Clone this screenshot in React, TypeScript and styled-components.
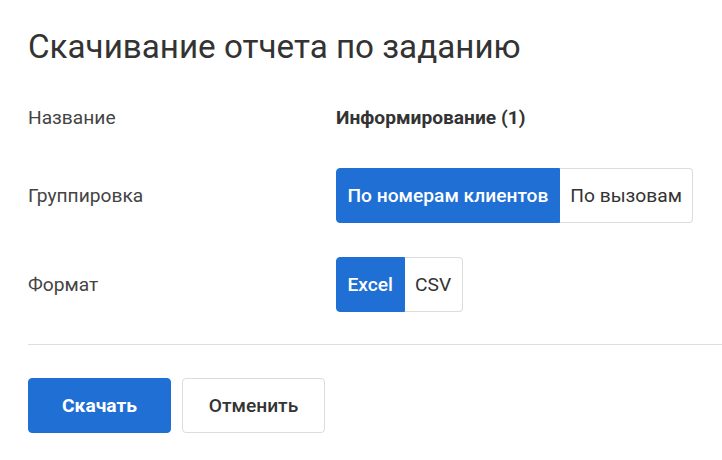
import React, { useState } from "react";
import styled, { createGlobalStyle } from "styled-components";

const Global = createGlobalStyle`
  html, body { margin: 0; padding: 0; background: #fff; }
  body { font-family: Roboto, "Noto Sans", sans-serif; color: #333; }
  * { box-sizing: border-box; }
`;

const Page = styled.div`
  padding: 28px 0 0 28px;
  width: 722px;
`;

const Title = styled.h1`
  margin: 0;
  font-size: 33.2px;
  line-height: 38px;
  font-weight: 400;
  color: #333;
`;

const Form = styled.div`
  display: grid;
  grid-template-columns: 308px auto;
  align-items: center;
  row-gap: 34px;
  margin-top: 36px;
`;

const Label = styled.div`
  font-size: 19.2px;
  line-height: 32px;
  color: #444;
`;

const Value = styled.div`
  font-size: 19.2px;
  line-height: 32px;
  font-weight: 700;
  color: #333;
`;

const Segmented = styled.div`
  display: inline-flex;
  justify-self: start;
  height: 55px;
`;

const Segment = styled.button<{ $active: boolean }>`
  font-family: Roboto, "Noto Sans", sans-serif;
  font-size: 19.2px;
  font-weight: ${(p) => (p.$active ? 500 : 400)};
  white-space: nowrap;
  padding: 0 10.5px;
  height: 100%;
  cursor: pointer;
  border: 1px solid ${(p) => (p.$active ? "#1f6fd5" : "#dcdcdc")};
  background: ${(p) => (p.$active ? "#1f6fd5" : "#fff")};
  color: ${(p) => (p.$active ? "#fff" : "#333")};
  border-radius: 0;
  &:first-child { border-radius: 4px 0 0 4px; }
  &:last-child { border-radius: 0 4px 4px 0; }
  &:not(:first-child) { border-left: none; }
`;

const Divider = styled.hr`
  margin: 32px 0 0 0;
  border: none;
  border-top: 1px solid #dedede;
`;

const Actions = styled.div`
  display: flex;
  gap: 11px;
  margin-top: 33px;
`;

const Button = styled.button<{ $primary?: boolean }>`
  font-family: Roboto, "Noto Sans", sans-serif;
  font-size: 19.2px;
  font-weight: ${(p) => (p.$primary ? 700 : 500)};
  white-space: nowrap;
  width: 143px;
  height: 55px;
  border-radius: 4px;
  cursor: pointer;
  border: 1px solid ${(p) => (p.$primary ? "#1f6fd5" : "#dcdcdc")};
  background: ${(p) => (p.$primary ? "#1f6fd5" : "#fff")};
  color: ${(p) => (p.$primary ? "#fff" : "#333")};
`;

export default function App() {
  const [group, setGroup] = useState(0);
  const [format, setFormat] = useState(0);
  const groups = ["По номерам клиентов", "По вызовам"];
  const formats = ["Excel", "CSV"];
  return (
    <>
      <Global />
      <Page>
        <Title>Скачивание отчета по заданию</Title>
        <Form>
          <Label>Название</Label>
          <Value>Информирование (1)</Value>
          <Label>Группировка</Label>
          <Segmented>
            {groups.map((g, i) => (
              <Segment key={g} $active={group === i} onClick={() => setGroup(i)}>
                {g}
              </Segment>
            ))}
          </Segmented>
          <Label>Формат</Label>
          <Segmented>
            {formats.map((f, i) => (
              <Segment key={f} $active={format === i} onClick={() => setFormat(i)}>
                {f}
              </Segment>
            ))}
          </Segmented>
        </Form>
        <Divider />
        <Actions>
          <Button $primary>Скачать</Button>
          <Button>Отменить</Button>
        </Actions>
      </Page>
    </>
  );
}
